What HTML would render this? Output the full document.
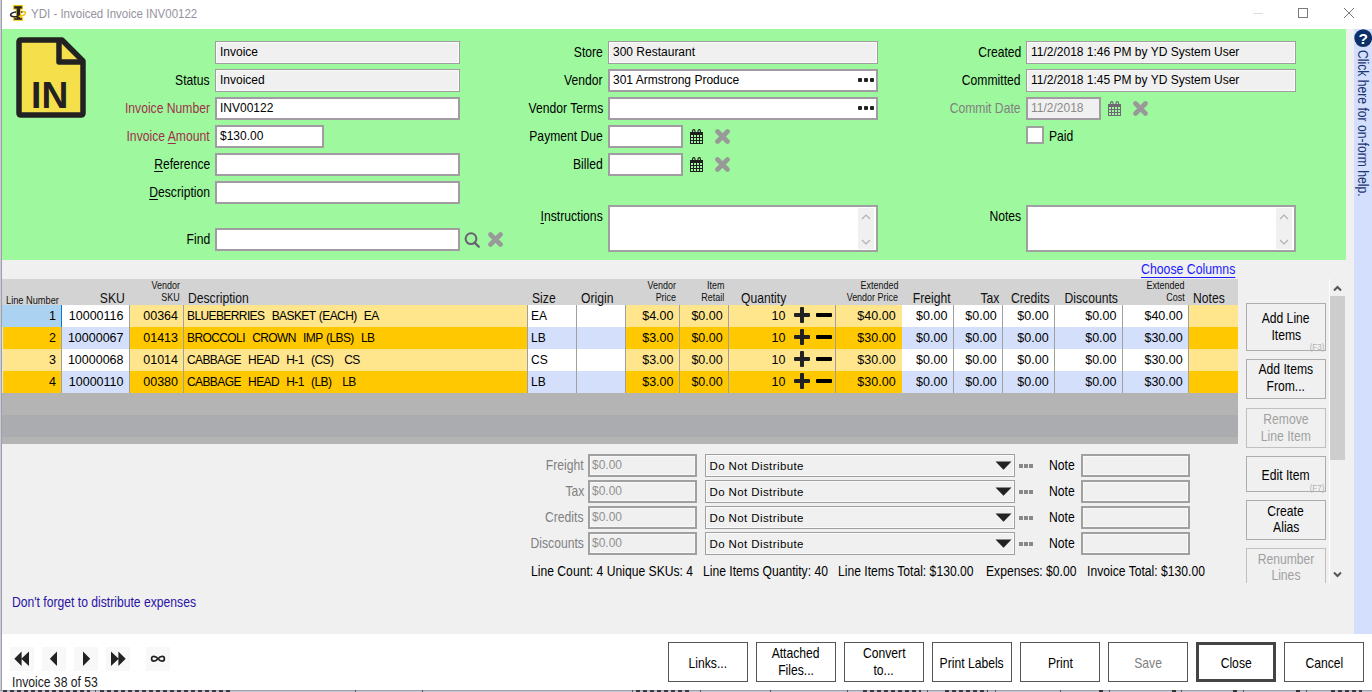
<!DOCTYPE html>
<html><head><meta charset="utf-8"><style>
html,body{margin:0;padding:0;width:1372px;height:692px;overflow:hidden;background:#fff}
body{position:relative;font-family:"Liberation Sans", sans-serif}
.r,.t{position:absolute}
.t{white-space:nowrap}
u{text-decoration:underline;text-underline-offset:2px}
</style></head><body>
<div class="r" style="left:0px;top:0px;width:1372px;height:692px;background:#ffffff;"></div>
<div class="r" style="left:0px;top:0px;width:1px;height:692px;background:#c8cce0;"></div>
<div class="r" style="left:1px;top:0px;width:1px;height:692px;background:#a0a0a0;"></div>
<div class="r" style="left:2px;top:29px;width:1344px;height:231px;background:#9ef89e;"></div>
<div class="r" style="left:2px;top:260px;width:1352px;height:374px;background:#f0f0f0;"></div>
<div class="r" style="left:1346px;top:29px;width:8px;height:231px;background:#f0f0f0;"></div>
<div class="r" style="left:1354px;top:29px;width:18px;height:605px;background:#d4defd;"></div>
<div class="r" style="left:0px;top:690px;width:1372px;height:2px;background:#c4c8d6;"></div>
<div class="r" style="left:0px;top:690px;width:1372px;height:1px;background:#9ea2ae;"></div>
<div class="r" style="left:3px;top:690px;width:87px;height:2px;background:repeating-linear-gradient(90deg,#3a3a44 0 4px,transparent 4px 7px)"></div>
<div class="r" style="left:100px;top:690px;width:132px;height:2px;background:repeating-linear-gradient(90deg,#3a3a44 0 4px,transparent 4px 7px)"></div>
<div class="r" style="left:636px;top:690px;width:55px;height:2px;background:repeating-linear-gradient(90deg,#3a3a44 0 4px,transparent 4px 7px)"></div>
<div class="r" style="left:863px;top:690px;width:58px;height:2px;background:repeating-linear-gradient(90deg,#3a3a44 0 4px,transparent 4px 7px)"></div>
<div class="r" style="left:945px;top:690px;width:43px;height:2px;background:repeating-linear-gradient(90deg,#3a3a44 0 4px,transparent 4px 7px)"></div>
<div class="r" style="left:1331px;top:690px;width:31px;height:2px;background:repeating-linear-gradient(90deg,#3a3a44 0 4px,transparent 4px 7px)"></div>
<div class="r" style="left:95px;top:690px;width:1px;height:2px;background:#555;"></div>
<div class="r" style="left:355px;top:690px;width:1px;height:2px;background:#555;"></div>
<div class="r" style="left:422px;top:690px;width:1px;height:2px;background:#555;"></div>
<div class="r" style="left:632px;top:690px;width:1px;height:2px;background:#555;"></div>
<div class="r" style="left:700px;top:690px;width:1px;height:2px;background:#555;"></div>
<div class="r" style="left:770px;top:690px;width:1px;height:2px;background:#555;"></div>
<div class="r" style="left:847px;top:690px;width:1px;height:2px;background:#555;"></div>
<div class="r" style="left:927px;top:690px;width:1px;height:2px;background:#555;"></div>
<div class="r" style="left:995px;top:690px;width:1px;height:2px;background:#555;"></div>
<div class="r" style="left:1060px;top:690px;width:1px;height:2px;background:#555;"></div>
<div class="r" style="left:1109px;top:690px;width:1px;height:2px;background:#555;"></div>
<div class="r" style="left:1181px;top:690px;width:1px;height:2px;background:#555;"></div>
<div class="r" style="left:1243px;top:690px;width:1px;height:2px;background:#555;"></div>
<div class="r" style="left:1306px;top:690px;width:1px;height:2px;background:#555;"></div>
<div class="r" style="left:1099px;top:690px;width:4px;height:2px;background:#333;"></div>
<div class="r" style="left:1172px;top:690px;width:4px;height:2px;background:#333;"></div>
<div class="r" style="left:1233px;top:690px;width:4px;height:2px;background:#333;"></div>
<div class="r" style="left:1296px;top:690px;width:4px;height:2px;background:#333;"></div>
<svg class="r" style="left:9px;top:4px" width="18" height="18" viewBox="0 0 18 18">
<path d="M4.1 1.1 H14 V5.5 H12 V13.1 H14 V16.8 H4.1 V13.1 H6.8 V5.5 H4.1 Z" fill="#f2c400"/>
<rect x="5.2" y="2.2" width="7.7" height="2.4" fill="#23232b"/>
<rect x="5.2" y="14.2" width="7.7" height="1.6" fill="#23232b"/>
<rect x="7.8" y="4.2" width="3.2" height="10.4" fill="#23232b"/>
<path d="M9.5 12.6 C5 13.2 1.2 12.6 1.6 10.8 C1.9 9.3 4.5 8.4 7.2 8.1" fill="none" stroke="#23232b" stroke-width="1.5"/>
<path d="M9.5 12.6 C13 12 16.8 10.4 16.5 8.6 C16.3 7.6 14.8 7.4 13.4 7.8" fill="none" stroke="#f2c400" stroke-width="1.5"/>
<path d="M13.4 7.8 L12.2 8.2" stroke="#23232b" stroke-width="1.5"/>
</svg>
<div class="t" style="left:31px;top:6.00px;font-size:13px;line-height:16px;color:#96929e;"><span style="display:inline-block;transform:scaleX(0.885);transform-origin:0 50%">YDI - Invoiced Invoice INV00122</span></div>
<div class="r" style="left:1253px;top:13px;width:10px;height:1px;background:#dedede;"></div>
<div class="r" style="left:1298px;top:8px;width:10px;height:10px;background:transparent;border:1px solid #7a7a7a;box-sizing:border-box;"></div>
<svg class="r" style="left:1343px;top:7px" width="12" height="12" viewBox="0 0 12 12"><path d="M1 1 L11 11 M11 1 L1 11" stroke="#6a6a6a" stroke-width="0.9"/></svg>
<svg class="r" style="left:15px;top:36px" width="72" height="83" viewBox="0 0 72 83">
<path d="M6 4 H47 L68 25 V77 Q68 79 66 79 H6 Q4 79 4 77 V6 Q4 4 6 4 Z" fill="#f5e04c" stroke="#222" stroke-width="5.5" stroke-linejoin="round"/>
<path d="M44 4 V26 H68" fill="none" stroke="#222" stroke-width="5.5" stroke-linejoin="round"/>
<text x="16.1" y="72" font-family="Liberation Sans" font-weight="bold" font-size="36" fill="#222" textLength="37.2" lengthAdjust="spacingAndGlyphs">IN</text>
</svg>
<div class="r" style="left:215px;top:41px;width:245px;height:23px;background:#f0f0f0;border:1px solid #a09ca0;box-sizing:border-box;box-shadow:inset 0 0 0 1px #fafafa;"></div>
<div class="t" style="left:220px;top:45.00px;font-size:12px;line-height:15px;color:#000;">Invoice</div>
<div class="t" style="left:-90px;width:300px;text-align:right;top:71.00px;font-size:15px;line-height:18px;color:#000;"><span style="display:inline-block;transform:scaleX(0.81);transform-origin:100% 50%">Status</span></div>
<div class="r" style="left:215px;top:69px;width:245px;height:23px;background:#f0f0f0;border:1px solid #a09ca0;box-sizing:border-box;box-shadow:inset 0 0 0 1px #fafafa;"></div>
<div class="t" style="left:220px;top:73.00px;font-size:12px;line-height:15px;color:#000;">Invoiced</div>
<div class="t" style="left:-90px;width:300px;text-align:right;top:99.00px;font-size:15px;line-height:18px;color:#a0304a;"><span style="display:inline-block;transform:scaleX(0.81);transform-origin:100% 50%">Invoice Number</span></div>
<div class="r" style="left:215px;top:97px;width:245px;height:23px;background:#ffffff;border:2px solid #a09ca2;box-sizing:border-box;"></div>
<div class="t" style="left:220px;top:101.00px;font-size:12px;line-height:15px;color:#000;">INV00122</div>
<div class="t" style="left:-90px;width:300px;text-align:right;top:127.00px;font-size:15px;line-height:18px;color:#a0304a;"><span style="display:inline-block;transform:scaleX(0.81);transform-origin:100% 50%">Invoice <u>A</u>mount</span></div>
<div class="r" style="left:215px;top:125px;width:109px;height:23px;background:#ffffff;border:2px solid #a09ca2;box-sizing:border-box;"></div>
<div class="t" style="left:220px;top:129.00px;font-size:12px;line-height:15px;color:#000;">$130.00</div>
<div class="t" style="left:-90px;width:300px;text-align:right;top:155.00px;font-size:15px;line-height:18px;color:#000;"><span style="display:inline-block;transform:scaleX(0.81);transform-origin:100% 50%"><u>R</u>eference</span></div>
<div class="r" style="left:215px;top:153px;width:245px;height:23px;background:#ffffff;border:2px solid #a09ca2;box-sizing:border-box;"></div>
<div class="t" style="left:-90px;width:300px;text-align:right;top:183.00px;font-size:15px;line-height:18px;color:#000;"><span style="display:inline-block;transform:scaleX(0.81);transform-origin:100% 50%"><u>D</u>escription</span></div>
<div class="r" style="left:215px;top:181px;width:245px;height:23px;background:#ffffff;border:2px solid #a09ca2;box-sizing:border-box;"></div>
<div class="t" style="left:-90px;width:300px;text-align:right;top:230.00px;font-size:15px;line-height:18px;color:#000;"><span style="display:inline-block;transform:scaleX(0.81);transform-origin:100% 50%">Find</span></div>
<div class="r" style="left:215px;top:228px;width:245px;height:23px;background:#ffffff;border:2px solid #a09ca2;box-sizing:border-box;"></div>
<svg class="r" style="left:462px;top:230px" width="20" height="20" viewBox="0 0 20 20"><circle cx="9" cy="8.7" r="5.4" fill="none" stroke="#666070" stroke-width="2"/><path d="M12.6 12.6 L16.8 16.8" stroke="#666070" stroke-width="2.2" stroke-linecap="round"/></svg>
<svg class="r" style="left:488px;top:232px" width="15" height="15" viewBox="0 0 15 15"><path d="M2.5 2.5 L12.5 12.5 M12.5 2.5 L2.5 12.5" stroke="#999" stroke-width="4.6" stroke-linecap="round"/></svg>
<div class="t" style="left:303px;width:300px;text-align:right;top:43.00px;font-size:15px;line-height:18px;color:#000;"><span style="display:inline-block;transform:scaleX(0.81);transform-origin:100% 50%">Store</span></div>
<div class="r" style="left:608px;top:41px;width:270px;height:23px;background:#f0f0f0;border:1px solid #a09ca0;box-sizing:border-box;box-shadow:inset 0 0 0 1px #fafafa;"></div>
<div class="t" style="left:613px;top:45.00px;font-size:12px;line-height:15px;color:#000;">300 Restaurant</div>
<div class="t" style="left:303px;width:300px;text-align:right;top:71.00px;font-size:15px;line-height:18px;color:#000;"><span style="display:inline-block;transform:scaleX(0.81);transform-origin:100% 50%">Vendor</span></div>
<div class="r" style="left:608px;top:69px;width:270px;height:23px;background:#ffffff;border:2px solid #a09ca2;box-sizing:border-box;"></div>
<div class="t" style="left:613px;top:73.00px;font-size:12px;line-height:15px;color:#000;">301 Armstrong Produce</div>
<div class="r" style="left:858px;top:78px;width:4px;height:4px;background:#222;border-radius:1px;"></div>
<div class="r" style="left:864px;top:78px;width:4px;height:4px;background:#222;border-radius:1px;"></div>
<div class="r" style="left:870px;top:78px;width:4px;height:4px;background:#222;border-radius:1px;"></div>
<div class="t" style="left:303px;width:300px;text-align:right;top:99.00px;font-size:15px;line-height:18px;color:#000;"><span style="display:inline-block;transform:scaleX(0.81);transform-origin:100% 50%">Vendor Terms</span></div>
<div class="r" style="left:608px;top:97px;width:270px;height:23px;background:#ffffff;border:2px solid #a09ca2;box-sizing:border-box;"></div>
<div class="r" style="left:858px;top:106px;width:4px;height:4px;background:#222;border-radius:1px;"></div>
<div class="r" style="left:864px;top:106px;width:4px;height:4px;background:#222;border-radius:1px;"></div>
<div class="r" style="left:870px;top:106px;width:4px;height:4px;background:#222;border-radius:1px;"></div>
<div class="t" style="left:303px;width:300px;text-align:right;top:127.00px;font-size:15px;line-height:18px;color:#000;"><span style="display:inline-block;transform:scaleX(0.81);transform-origin:100% 50%">Payment Due</span></div>
<div class="r" style="left:608px;top:125px;width:75px;height:23px;background:#ffffff;border:2px solid #a09ca2;box-sizing:border-box;"></div>
<svg class="r" style="left:690px;top:129px" width="14" height="15" viewBox="0 0 14 15">
<rect x="0" y="3" width="13" height="12" fill="#1e1e1e" shape-rendering="crispEdges"/>
<g fill="#9ef89e" shape-rendering="crispEdges"><rect x="1" y="6" width="2" height="2"/><rect x="1" y="9" width="2" height="2"/><rect x="1" y="12" width="2" height="2"/><rect x="4" y="6" width="2" height="2"/><rect x="4" y="9" width="2" height="2"/><rect x="4" y="12" width="2" height="2"/><rect x="7" y="6" width="2" height="2"/><rect x="7" y="9" width="2" height="2"/><rect x="7" y="12" width="2" height="2"/><rect x="10" y="6" width="2" height="2"/><rect x="10" y="9" width="2" height="2"/><rect x="10" y="12" width="2" height="2"/></g>
<path d="M2.5 4 V2.2 Q2.5 0.6 3.8 0.6 Q5 0.6 5 2.2 V4 M8 4 V2.2 Q8 0.6 9.2 0.6 Q10.5 0.6 10.5 2.2 V4" fill="none" stroke="#1e1e1e" stroke-width="1.1"/>
</svg>
<svg class="r" style="left:715px;top:129px" width="15" height="15" viewBox="0 0 15 15"><path d="M2.5 2.5 L12.5 12.5 M12.5 2.5 L2.5 12.5" stroke="#999" stroke-width="4.6" stroke-linecap="round"/></svg>
<div class="t" style="left:303px;width:300px;text-align:right;top:155.00px;font-size:15px;line-height:18px;color:#000;"><span style="display:inline-block;transform:scaleX(0.81);transform-origin:100% 50%">Billed</span></div>
<div class="r" style="left:608px;top:153px;width:75px;height:23px;background:#ffffff;border:2px solid #a09ca2;box-sizing:border-box;"></div>
<svg class="r" style="left:690px;top:157px" width="14" height="15" viewBox="0 0 14 15">
<rect x="0" y="3" width="13" height="12" fill="#1e1e1e" shape-rendering="crispEdges"/>
<g fill="#9ef89e" shape-rendering="crispEdges"><rect x="1" y="6" width="2" height="2"/><rect x="1" y="9" width="2" height="2"/><rect x="1" y="12" width="2" height="2"/><rect x="4" y="6" width="2" height="2"/><rect x="4" y="9" width="2" height="2"/><rect x="4" y="12" width="2" height="2"/><rect x="7" y="6" width="2" height="2"/><rect x="7" y="9" width="2" height="2"/><rect x="7" y="12" width="2" height="2"/><rect x="10" y="6" width="2" height="2"/><rect x="10" y="9" width="2" height="2"/><rect x="10" y="12" width="2" height="2"/></g>
<path d="M2.5 4 V2.2 Q2.5 0.6 3.8 0.6 Q5 0.6 5 2.2 V4 M8 4 V2.2 Q8 0.6 9.2 0.6 Q10.5 0.6 10.5 2.2 V4" fill="none" stroke="#1e1e1e" stroke-width="1.1"/>
</svg>
<svg class="r" style="left:715px;top:157px" width="15" height="15" viewBox="0 0 15 15"><path d="M2.5 2.5 L12.5 12.5 M12.5 2.5 L2.5 12.5" stroke="#999" stroke-width="4.6" stroke-linecap="round"/></svg>
<div class="t" style="left:303px;width:300px;text-align:right;top:207.00px;font-size:15px;line-height:18px;color:#000;"><span style="display:inline-block;transform:scaleX(0.81);transform-origin:100% 50%"><u>I</u>nstructions</span></div>
<div class="r" style="left:608px;top:205px;width:270px;height:47px;background:#fff;border:2px solid #a0a0a0;box-sizing:border-box;"></div>
<div class="r" style="left:858px;top:208px;width:16px;height:41px;background:#f0f0f0;"></div>
<svg class="r" style="left:860px;top:213px" width="12" height="8" viewBox="0 0 12 8"><path d="M2 6 L6 2 L10 6" fill="none" stroke="#b0b0b0" stroke-width="1.2"/></svg>
<svg class="r" style="left:860px;top:238px" width="12" height="8" viewBox="0 0 12 8"><path d="M2 2 L6 6 L10 2" fill="none" stroke="#b0b0b0" stroke-width="1.2"/></svg>
<div class="t" style="left:721px;width:300px;text-align:right;top:43.00px;font-size:15px;line-height:18px;color:#000;"><span style="display:inline-block;transform:scaleX(0.81);transform-origin:100% 50%">Created</span></div>
<div class="r" style="left:1026px;top:41px;width:270px;height:23px;background:#f0f0f0;border:1px solid #a09ca0;box-sizing:border-box;box-shadow:inset 0 0 0 1px #fafafa;"></div>
<div class="t" style="left:1031px;top:45.00px;font-size:12px;line-height:15px;color:#000;">11/2/2018 1:46 PM by YD System User</div>
<div class="t" style="left:721px;width:300px;text-align:right;top:71.00px;font-size:15px;line-height:18px;color:#000;"><span style="display:inline-block;transform:scaleX(0.81);transform-origin:100% 50%">Committed</span></div>
<div class="r" style="left:1026px;top:69px;width:270px;height:23px;background:#f0f0f0;border:1px solid #a09ca0;box-sizing:border-box;box-shadow:inset 0 0 0 1px #fafafa;"></div>
<div class="t" style="left:1031px;top:73.00px;font-size:12px;line-height:15px;color:#000;">11/2/2018 1:45 PM by YD System User</div>
<div class="t" style="left:721px;width:300px;text-align:right;top:99.00px;font-size:15px;line-height:18px;color:#808080;"><span style="display:inline-block;transform:scaleX(0.81);transform-origin:100% 50%">Commit Date</span></div>
<div class="r" style="left:1026px;top:97px;width:75px;height:23px;background:#f0f0f0;border:2px solid #a09ca2;box-sizing:border-box;"></div>
<div class="t" style="left:1031px;top:101.00px;font-size:12px;line-height:15px;color:#8a8a8a;">11/2/2018</div>
<svg class="r" style="left:1108px;top:101px" width="14" height="15" viewBox="0 0 14 15">
<rect x="0" y="3" width="13" height="12" fill="#6e6874" shape-rendering="crispEdges"/>
<g fill="#9ef89e" shape-rendering="crispEdges"><rect x="1" y="6" width="2" height="2"/><rect x="1" y="9" width="2" height="2"/><rect x="1" y="12" width="2" height="2"/><rect x="4" y="6" width="2" height="2"/><rect x="4" y="9" width="2" height="2"/><rect x="4" y="12" width="2" height="2"/><rect x="7" y="6" width="2" height="2"/><rect x="7" y="9" width="2" height="2"/><rect x="7" y="12" width="2" height="2"/><rect x="10" y="6" width="2" height="2"/><rect x="10" y="9" width="2" height="2"/><rect x="10" y="12" width="2" height="2"/></g>
<path d="M2.5 4 V2.2 Q2.5 0.6 3.8 0.6 Q5 0.6 5 2.2 V4 M8 4 V2.2 Q8 0.6 9.2 0.6 Q10.5 0.6 10.5 2.2 V4" fill="none" stroke="#6e6874" stroke-width="1.1"/>
</svg>
<svg class="r" style="left:1133px;top:101px" width="15" height="15" viewBox="0 0 15 15"><path d="M2.5 2.5 L12.5 12.5 M12.5 2.5 L2.5 12.5" stroke="#999" stroke-width="4.6" stroke-linecap="round"/></svg>
<div class="r" style="left:1026px;top:126px;width:18px;height:18px;background:#fff;border:2px solid #a0a0a0;box-sizing:border-box;"></div>
<div class="t" style="left:1049px;top:127.00px;font-size:15px;line-height:18px;color:#000;"><span style="display:inline-block;transform:scaleX(0.81);transform-origin:0 50%">Paid</span></div>
<div class="t" style="left:721px;width:300px;text-align:right;top:207.00px;font-size:15px;line-height:18px;color:#000;"><span style="display:inline-block;transform:scaleX(0.81);transform-origin:100% 50%">Notes</span></div>
<div class="r" style="left:1026px;top:205px;width:270px;height:47px;background:#fff;border:2px solid #a0a0a0;box-sizing:border-box;"></div>
<div class="r" style="left:1276px;top:208px;width:16px;height:41px;background:#f0f0f0;"></div>
<svg class="r" style="left:1278px;top:213px" width="12" height="8" viewBox="0 0 12 8"><path d="M2 6 L6 2 L10 6" fill="none" stroke="#b0b0b0" stroke-width="1.2"/></svg>
<svg class="r" style="left:1278px;top:238px" width="12" height="8" viewBox="0 0 12 8"><path d="M2 2 L6 6 L10 2" fill="none" stroke="#b0b0b0" stroke-width="1.2"/></svg>
<svg class="r" style="left:1354px;top:29px" width="18" height="19" viewBox="0 0 18 19"><circle cx="9.2" cy="9.1" r="8.9" fill="#0d3068"/><text x="9.2" y="15.4" text-anchor="middle" font-family="Liberation Sans" font-weight="bold" font-size="15.5" fill="#fff">?</text></svg>
<div class="t" style="left:1354px;top:50px;font-size:15px;line-height:18px;color:#1b3570;transform-origin:0 0;transform:translate(18px,0) rotate(90deg) scaleX(0.81);white-space:nowrap">Click here for on-form help.</div>
<div class="r" style="left:2px;top:279px;width:1236px;height:26px;background:#d3d3d3;"></div>
<div class="r" style="left:2px;top:305px;width:60px;height:22px;background:#acd2f2;"></div>
<div class="r" style="left:62px;top:305px;width:68px;height:22px;background:#ffffff;"></div>
<div class="r" style="left:130px;top:305px;width:54px;height:22px;background:#ffe58c;"></div>
<div class="r" style="left:184px;top:305px;width:344px;height:22px;background:#ffe58c;"></div>
<div class="r" style="left:528px;top:305px;width:49px;height:22px;background:#ffffff;"></div>
<div class="r" style="left:577px;top:305px;width:49px;height:22px;background:#ffffff;"></div>
<div class="r" style="left:626px;top:305px;width:54px;height:22px;background:#ffe58c;"></div>
<div class="r" style="left:680px;top:305px;width:49px;height:22px;background:#ffe58c;"></div>
<div class="r" style="left:729px;top:305px;width:107px;height:22px;background:#ffe58c;"></div>
<div class="r" style="left:836px;top:305px;width:66px;height:22px;background:#ffe58c;"></div>
<div class="r" style="left:902px;top:305px;width:52px;height:22px;background:#ffffff;"></div>
<div class="r" style="left:954px;top:305px;width:49px;height:22px;background:#ffffff;"></div>
<div class="r" style="left:1003px;top:305px;width:52px;height:22px;background:#ffffff;"></div>
<div class="r" style="left:1055px;top:305px;width:68px;height:22px;background:#ffffff;"></div>
<div class="r" style="left:1123px;top:305px;width:66px;height:22px;background:#ffffff;"></div>
<div class="r" style="left:1189px;top:305px;width:49px;height:22px;background:#ffe58c;"></div>
<div class="r" style="left:2px;top:327px;width:60px;height:22px;background:#ffc800;"></div>
<div class="r" style="left:62px;top:327px;width:68px;height:22px;background:#d3dffb;"></div>
<div class="r" style="left:130px;top:327px;width:54px;height:22px;background:#ffc800;"></div>
<div class="r" style="left:184px;top:327px;width:344px;height:22px;background:#ffc800;"></div>
<div class="r" style="left:528px;top:327px;width:49px;height:22px;background:#d3dffb;"></div>
<div class="r" style="left:577px;top:327px;width:49px;height:22px;background:#d3dffb;"></div>
<div class="r" style="left:626px;top:327px;width:54px;height:22px;background:#ffc800;"></div>
<div class="r" style="left:680px;top:327px;width:49px;height:22px;background:#ffc800;"></div>
<div class="r" style="left:729px;top:327px;width:107px;height:22px;background:#ffc800;"></div>
<div class="r" style="left:836px;top:327px;width:66px;height:22px;background:#ffc800;"></div>
<div class="r" style="left:902px;top:327px;width:52px;height:22px;background:#d3dffb;"></div>
<div class="r" style="left:954px;top:327px;width:49px;height:22px;background:#d3dffb;"></div>
<div class="r" style="left:1003px;top:327px;width:52px;height:22px;background:#d3dffb;"></div>
<div class="r" style="left:1055px;top:327px;width:68px;height:22px;background:#d3dffb;"></div>
<div class="r" style="left:1123px;top:327px;width:66px;height:22px;background:#d3dffb;"></div>
<div class="r" style="left:1189px;top:327px;width:49px;height:22px;background:#ffc800;"></div>
<div class="r" style="left:2px;top:349px;width:60px;height:22px;background:#ffe58c;"></div>
<div class="r" style="left:62px;top:349px;width:68px;height:22px;background:#ffffff;"></div>
<div class="r" style="left:130px;top:349px;width:54px;height:22px;background:#ffe58c;"></div>
<div class="r" style="left:184px;top:349px;width:344px;height:22px;background:#ffe58c;"></div>
<div class="r" style="left:528px;top:349px;width:49px;height:22px;background:#ffffff;"></div>
<div class="r" style="left:577px;top:349px;width:49px;height:22px;background:#ffffff;"></div>
<div class="r" style="left:626px;top:349px;width:54px;height:22px;background:#ffe58c;"></div>
<div class="r" style="left:680px;top:349px;width:49px;height:22px;background:#ffe58c;"></div>
<div class="r" style="left:729px;top:349px;width:107px;height:22px;background:#ffe58c;"></div>
<div class="r" style="left:836px;top:349px;width:66px;height:22px;background:#ffe58c;"></div>
<div class="r" style="left:902px;top:349px;width:52px;height:22px;background:#ffffff;"></div>
<div class="r" style="left:954px;top:349px;width:49px;height:22px;background:#ffffff;"></div>
<div class="r" style="left:1003px;top:349px;width:52px;height:22px;background:#ffffff;"></div>
<div class="r" style="left:1055px;top:349px;width:68px;height:22px;background:#ffffff;"></div>
<div class="r" style="left:1123px;top:349px;width:66px;height:22px;background:#ffffff;"></div>
<div class="r" style="left:1189px;top:349px;width:49px;height:22px;background:#ffe58c;"></div>
<div class="r" style="left:2px;top:371px;width:60px;height:22px;background:#ffc800;"></div>
<div class="r" style="left:62px;top:371px;width:68px;height:22px;background:#d3dffb;"></div>
<div class="r" style="left:130px;top:371px;width:54px;height:22px;background:#ffc800;"></div>
<div class="r" style="left:184px;top:371px;width:344px;height:22px;background:#ffc800;"></div>
<div class="r" style="left:528px;top:371px;width:49px;height:22px;background:#d3dffb;"></div>
<div class="r" style="left:577px;top:371px;width:49px;height:22px;background:#d3dffb;"></div>
<div class="r" style="left:626px;top:371px;width:54px;height:22px;background:#ffc800;"></div>
<div class="r" style="left:680px;top:371px;width:49px;height:22px;background:#ffc800;"></div>
<div class="r" style="left:729px;top:371px;width:107px;height:22px;background:#ffc800;"></div>
<div class="r" style="left:836px;top:371px;width:66px;height:22px;background:#ffc800;"></div>
<div class="r" style="left:902px;top:371px;width:52px;height:22px;background:#d3dffb;"></div>
<div class="r" style="left:954px;top:371px;width:49px;height:22px;background:#d3dffb;"></div>
<div class="r" style="left:1003px;top:371px;width:52px;height:22px;background:#d3dffb;"></div>
<div class="r" style="left:1055px;top:371px;width:68px;height:22px;background:#d3dffb;"></div>
<div class="r" style="left:1123px;top:371px;width:66px;height:22px;background:#d3dffb;"></div>
<div class="r" style="left:1189px;top:371px;width:49px;height:22px;background:#ffc800;"></div>
<div class="r" style="left:61px;top:305px;width:1px;height:88px;background:#a0a0a0;"></div>
<div class="r" style="left:129px;top:305px;width:1px;height:88px;background:#a0a0a0;"></div>
<div class="r" style="left:183px;top:305px;width:1px;height:88px;background:#a0a0a0;"></div>
<div class="r" style="left:527px;top:305px;width:1px;height:88px;background:#a0a0a0;"></div>
<div class="r" style="left:576px;top:305px;width:1px;height:88px;background:#a0a0a0;"></div>
<div class="r" style="left:625px;top:305px;width:1px;height:88px;background:#a0a0a0;"></div>
<div class="r" style="left:679px;top:305px;width:1px;height:88px;background:#a0a0a0;"></div>
<div class="r" style="left:728px;top:305px;width:1px;height:88px;background:#a0a0a0;"></div>
<div class="r" style="left:835px;top:305px;width:1px;height:88px;background:#a0a0a0;"></div>
<div class="r" style="left:953px;top:305px;width:1px;height:88px;background:#a0a0a0;"></div>
<div class="r" style="left:1002px;top:305px;width:1px;height:88px;background:#a0a0a0;"></div>
<div class="r" style="left:1054px;top:305px;width:1px;height:88px;background:#a0a0a0;"></div>
<div class="r" style="left:1122px;top:305px;width:1px;height:88px;background:#a0a0a0;"></div>
<div class="r" style="left:1188px;top:305px;width:1px;height:88px;background:#a0a0a0;"></div>
<div class="r" style="left:61px;top:305px;width:1px;height:22px;background:#0a78d7;"></div>
<div class="r" style="left:2px;top:327px;width:1px;height:117px;background:#e4e4ec;"></div>
<div class="r" style="left:2px;top:393px;width:1236px;height:22px;background:#b4b4b4;"></div>
<div class="r" style="left:2px;top:415px;width:1236px;height:22px;background:#abacb0;"></div>
<div class="r" style="left:2px;top:437px;width:1236px;height:7px;background:#b4b4b4;"></div>
<div class="t" style="left:6px;top:293.00px;font-size:11px;line-height:14px;color:#111;"><span style="display:inline-block;transform:scaleX(0.84);transform-origin:0 50%">Line Number</span></div>
<div class="t" style="left:-75.2px;width:200px;text-align:right;top:289.00px;font-size:15px;line-height:18px;color:#111;"><span style="display:inline-block;transform:scaleX(0.81);transform-origin:100% 50%">SKU</span></div>
<div class="t" style="left:-20.400000000000006px;width:200px;text-align:right;top:278.00px;font-size:11px;line-height:14px;color:#111;"><span style="display:inline-block;transform:scaleX(0.815);transform-origin:100% 50%">Vendor</span></div>
<div class="t" style="left:-20.400000000000006px;width:200px;text-align:right;top:290.00px;font-size:11px;line-height:14px;color:#111;"><span style="display:inline-block;transform:scaleX(0.815);transform-origin:100% 50%">SKU</span></div>
<div class="t" style="left:188px;top:289.00px;font-size:15px;line-height:18px;color:#111;"><span style="display:inline-block;transform:scaleX(0.81);transform-origin:0 50%">Description</span></div>
<div class="t" style="left:532px;top:289.00px;font-size:15px;line-height:18px;color:#111;"><span style="display:inline-block;transform:scaleX(0.81);transform-origin:0 50%">Size</span></div>
<div class="t" style="left:581px;top:289.00px;font-size:15px;line-height:18px;color:#111;"><span style="display:inline-block;transform:scaleX(0.81);transform-origin:0 50%">Origin</span></div>
<div class="t" style="left:475.70000000000005px;width:200px;text-align:right;top:278.00px;font-size:11px;line-height:14px;color:#111;"><span style="display:inline-block;transform:scaleX(0.815);transform-origin:100% 50%">Vendor</span></div>
<div class="t" style="left:475.70000000000005px;width:200px;text-align:right;top:290.00px;font-size:11px;line-height:14px;color:#111;"><span style="display:inline-block;transform:scaleX(0.815);transform-origin:100% 50%">Price</span></div>
<div class="t" style="left:524.5px;width:200px;text-align:right;top:278.00px;font-size:11px;line-height:14px;color:#111;"><span style="display:inline-block;transform:scaleX(0.815);transform-origin:100% 50%">Item</span></div>
<div class="t" style="left:524.5px;width:200px;text-align:right;top:290.00px;font-size:11px;line-height:14px;color:#111;"><span style="display:inline-block;transform:scaleX(0.815);transform-origin:100% 50%">Retail</span></div>
<div class="t" style="left:741px;top:289.00px;font-size:15px;line-height:18px;color:#111;"><span style="display:inline-block;transform:scaleX(0.81);transform-origin:0 50%">Quantity</span></div>
<div class="t" style="left:698px;width:200px;text-align:right;top:278.00px;font-size:11px;line-height:14px;color:#111;"><span style="display:inline-block;transform:scaleX(0.815);transform-origin:100% 50%">Extended</span></div>
<div class="t" style="left:698px;width:200px;text-align:right;top:290.00px;font-size:11px;line-height:14px;color:#111;"><span style="display:inline-block;transform:scaleX(0.815);transform-origin:100% 50%">Vendor Price</span></div>
<div class="t" style="left:750.5px;width:200px;text-align:right;top:289.00px;font-size:15px;line-height:18px;color:#111;"><span style="display:inline-block;transform:scaleX(0.81);transform-origin:100% 50%">Freight</span></div>
<div class="t" style="left:799px;width:200px;text-align:right;top:289.00px;font-size:15px;line-height:18px;color:#111;"><span style="display:inline-block;transform:scaleX(0.81);transform-origin:100% 50%">Tax</span></div>
<div class="t" style="left:850px;width:200px;text-align:right;top:289.00px;font-size:15px;line-height:18px;color:#111;"><span style="display:inline-block;transform:scaleX(0.81);transform-origin:100% 50%">Credits</span></div>
<div class="t" style="left:917.5px;width:200px;text-align:right;top:289.00px;font-size:15px;line-height:18px;color:#111;"><span style="display:inline-block;transform:scaleX(0.81);transform-origin:100% 50%">Discounts</span></div>
<div class="t" style="left:984.7px;width:200px;text-align:right;top:278.00px;font-size:11px;line-height:14px;color:#111;"><span style="display:inline-block;transform:scaleX(0.815);transform-origin:100% 50%">Extended</span></div>
<div class="t" style="left:984.7px;width:200px;text-align:right;top:290.00px;font-size:11px;line-height:14px;color:#111;"><span style="display:inline-block;transform:scaleX(0.815);transform-origin:100% 50%">Cost</span></div>
<div class="t" style="left:1193px;top:289.00px;font-size:15px;line-height:18px;color:#111;"><span style="display:inline-block;transform:scaleX(0.81);transform-origin:0 50%">Notes</span></div>
<div class="t" style="left:-144px;width:200px;text-align:right;top:309.00px;font-size:12.5px;line-height:15px;color:#000;">1</div>
<div class="t" style="left:-76.5px;width:200px;text-align:right;top:309.00px;font-size:12.5px;line-height:15px;color:#000;">10000116</div>
<div class="t" style="left:-22px;width:200px;text-align:right;top:309.00px;font-size:12.5px;line-height:15px;color:#000;">00364</div>
<div class="t" style="left:187px;top:309.00px;font-size:12px;line-height:15px;color:#000;letter-spacing:-0.6px;word-spacing:0.9px;white-space:pre;">BLUEBERRIES  BASKET (EACH)  EA</div>
<div class="t" style="left:531px;top:309.00px;font-size:12px;line-height:15px;color:#000;">EA</div>
<div class="t" style="left:473.5px;width:200px;text-align:right;top:309.00px;font-size:12.5px;line-height:15px;color:#000;">$4.00</div>
<div class="t" style="left:522.7px;width:200px;text-align:right;top:309.00px;font-size:12.5px;line-height:15px;color:#000;">$0.00</div>
<div class="t" style="left:585.4px;width:200px;text-align:right;top:309.00px;font-size:12.5px;line-height:15px;color:#000;">10</div>
<div class="r" style="left:794px;top:313px;width:16px;height:4px;background:#222;border-radius:1px;"></div>
<div class="r" style="left:800px;top:307px;width:4px;height:16px;background:#222;border-radius:1px;"></div>
<div class="r" style="left:816px;top:313px;width:16px;height:4px;background:#000;border-radius:1px;"></div>
<div class="t" style="left:695.6px;width:200px;text-align:right;top:309.00px;font-size:12.5px;line-height:15px;color:#000;">$40.00</div>
<div class="t" style="left:747.4px;width:200px;text-align:right;top:309.00px;font-size:12.5px;line-height:15px;color:#000;">$0.00</div>
<div class="t" style="left:796.6px;width:200px;text-align:right;top:309.00px;font-size:12.5px;line-height:15px;color:#000;">$0.00</div>
<div class="t" style="left:848.5999999999999px;width:200px;text-align:right;top:309.00px;font-size:12.5px;line-height:15px;color:#000;">$0.00</div>
<div class="t" style="left:916.5px;width:200px;text-align:right;top:309.00px;font-size:12.5px;line-height:15px;color:#000;">$0.00</div>
<div class="t" style="left:982.7px;width:200px;text-align:right;top:309.00px;font-size:12.5px;line-height:15px;color:#000;">$40.00</div>
<div class="t" style="left:-144px;width:200px;text-align:right;top:331.00px;font-size:12.5px;line-height:15px;color:#000;">2</div>
<div class="t" style="left:-76.5px;width:200px;text-align:right;top:331.00px;font-size:12.5px;line-height:15px;color:#000;">10000067</div>
<div class="t" style="left:-22px;width:200px;text-align:right;top:331.00px;font-size:12.5px;line-height:15px;color:#000;">01413</div>
<div class="t" style="left:187px;top:331.00px;font-size:12px;line-height:15px;color:#000;letter-spacing:-0.6px;word-spacing:0.9px;white-space:pre;">BROCCOLI  CROWN  IMP (LBS)  LB</div>
<div class="t" style="left:531px;top:331.00px;font-size:12px;line-height:15px;color:#000;">LB</div>
<div class="t" style="left:473.5px;width:200px;text-align:right;top:331.00px;font-size:12.5px;line-height:15px;color:#000;">$3.00</div>
<div class="t" style="left:522.7px;width:200px;text-align:right;top:331.00px;font-size:12.5px;line-height:15px;color:#000;">$0.00</div>
<div class="t" style="left:585.4px;width:200px;text-align:right;top:331.00px;font-size:12.5px;line-height:15px;color:#000;">10</div>
<div class="r" style="left:794px;top:335px;width:16px;height:4px;background:#222;border-radius:1px;"></div>
<div class="r" style="left:800px;top:329px;width:4px;height:16px;background:#222;border-radius:1px;"></div>
<div class="r" style="left:816px;top:335px;width:16px;height:4px;background:#000;border-radius:1px;"></div>
<div class="t" style="left:695.6px;width:200px;text-align:right;top:331.00px;font-size:12.5px;line-height:15px;color:#000;">$30.00</div>
<div class="t" style="left:747.4px;width:200px;text-align:right;top:331.00px;font-size:12.5px;line-height:15px;color:#000;">$0.00</div>
<div class="t" style="left:796.6px;width:200px;text-align:right;top:331.00px;font-size:12.5px;line-height:15px;color:#000;">$0.00</div>
<div class="t" style="left:848.5999999999999px;width:200px;text-align:right;top:331.00px;font-size:12.5px;line-height:15px;color:#000;">$0.00</div>
<div class="t" style="left:916.5px;width:200px;text-align:right;top:331.00px;font-size:12.5px;line-height:15px;color:#000;">$0.00</div>
<div class="t" style="left:982.7px;width:200px;text-align:right;top:331.00px;font-size:12.5px;line-height:15px;color:#000;">$30.00</div>
<div class="t" style="left:-144px;width:200px;text-align:right;top:353.00px;font-size:12.5px;line-height:15px;color:#000;">3</div>
<div class="t" style="left:-76.5px;width:200px;text-align:right;top:353.00px;font-size:12.5px;line-height:15px;color:#000;">10000068</div>
<div class="t" style="left:-22px;width:200px;text-align:right;top:353.00px;font-size:12.5px;line-height:15px;color:#000;">01014</div>
<div class="t" style="left:187px;top:353.00px;font-size:12px;line-height:15px;color:#000;letter-spacing:-0.6px;word-spacing:0.9px;white-space:pre;">CABBAGE  HEAD  H-1  (CS)   CS</div>
<div class="t" style="left:531px;top:353.00px;font-size:12px;line-height:15px;color:#000;">CS</div>
<div class="t" style="left:473.5px;width:200px;text-align:right;top:353.00px;font-size:12.5px;line-height:15px;color:#000;">$3.00</div>
<div class="t" style="left:522.7px;width:200px;text-align:right;top:353.00px;font-size:12.5px;line-height:15px;color:#000;">$0.00</div>
<div class="t" style="left:585.4px;width:200px;text-align:right;top:353.00px;font-size:12.5px;line-height:15px;color:#000;">10</div>
<div class="r" style="left:794px;top:357px;width:16px;height:4px;background:#222;border-radius:1px;"></div>
<div class="r" style="left:800px;top:351px;width:4px;height:16px;background:#222;border-radius:1px;"></div>
<div class="r" style="left:816px;top:357px;width:16px;height:4px;background:#000;border-radius:1px;"></div>
<div class="t" style="left:695.6px;width:200px;text-align:right;top:353.00px;font-size:12.5px;line-height:15px;color:#000;">$30.00</div>
<div class="t" style="left:747.4px;width:200px;text-align:right;top:353.00px;font-size:12.5px;line-height:15px;color:#000;">$0.00</div>
<div class="t" style="left:796.6px;width:200px;text-align:right;top:353.00px;font-size:12.5px;line-height:15px;color:#000;">$0.00</div>
<div class="t" style="left:848.5999999999999px;width:200px;text-align:right;top:353.00px;font-size:12.5px;line-height:15px;color:#000;">$0.00</div>
<div class="t" style="left:916.5px;width:200px;text-align:right;top:353.00px;font-size:12.5px;line-height:15px;color:#000;">$0.00</div>
<div class="t" style="left:982.7px;width:200px;text-align:right;top:353.00px;font-size:12.5px;line-height:15px;color:#000;">$30.00</div>
<div class="t" style="left:-144px;width:200px;text-align:right;top:375.00px;font-size:12.5px;line-height:15px;color:#000;">4</div>
<div class="t" style="left:-76.5px;width:200px;text-align:right;top:375.00px;font-size:12.5px;line-height:15px;color:#000;">10000110</div>
<div class="t" style="left:-22px;width:200px;text-align:right;top:375.00px;font-size:12.5px;line-height:15px;color:#000;">00380</div>
<div class="t" style="left:187px;top:375.00px;font-size:12px;line-height:15px;color:#000;letter-spacing:-0.6px;word-spacing:0.9px;white-space:pre;">CABBAGE  HEAD  H-1  (LB)   LB</div>
<div class="t" style="left:531px;top:375.00px;font-size:12px;line-height:15px;color:#000;">LB</div>
<div class="t" style="left:473.5px;width:200px;text-align:right;top:375.00px;font-size:12.5px;line-height:15px;color:#000;">$3.00</div>
<div class="t" style="left:522.7px;width:200px;text-align:right;top:375.00px;font-size:12.5px;line-height:15px;color:#000;">$0.00</div>
<div class="t" style="left:585.4px;width:200px;text-align:right;top:375.00px;font-size:12.5px;line-height:15px;color:#000;">10</div>
<div class="r" style="left:794px;top:379px;width:16px;height:4px;background:#222;border-radius:1px;"></div>
<div class="r" style="left:800px;top:373px;width:4px;height:16px;background:#222;border-radius:1px;"></div>
<div class="r" style="left:816px;top:379px;width:16px;height:4px;background:#000;border-radius:1px;"></div>
<div class="t" style="left:695.6px;width:200px;text-align:right;top:375.00px;font-size:12.5px;line-height:15px;color:#000;">$30.00</div>
<div class="t" style="left:747.4px;width:200px;text-align:right;top:375.00px;font-size:12.5px;line-height:15px;color:#000;">$0.00</div>
<div class="t" style="left:796.6px;width:200px;text-align:right;top:375.00px;font-size:12.5px;line-height:15px;color:#000;">$0.00</div>
<div class="t" style="left:848.5999999999999px;width:200px;text-align:right;top:375.00px;font-size:12.5px;line-height:15px;color:#000;">$0.00</div>
<div class="t" style="left:916.5px;width:200px;text-align:right;top:375.00px;font-size:12.5px;line-height:15px;color:#000;">$0.00</div>
<div class="t" style="left:982.7px;width:200px;text-align:right;top:375.00px;font-size:12.5px;line-height:15px;color:#000;">$30.00</div>
<div class="t" style="left:1141px;top:260.00px;font-size:15px;line-height:18px;color:#1a1aff;"><span style="display:inline-block;transform:scaleX(0.82);transform-origin:0 50%"><u style="text-underline-offset:2.5px">Choose Columns</u></span></div>
<div class="r" style="left:1240px;top:279px;width:90px;height:304px;overflow:hidden">
<div class="r" style="left:6px;top:24px;width:80px;height:48px;background:transparent;border:1px solid #adadad;box-sizing:border-box;"></div>
<div class="t" style="left:6px;width:80px;text-align:center;top:30.00px;font-size:15px;line-height:18px;color:#000;"><span style="display:inline-block;transform:scaleX(0.81);transform-origin:50% 50%">Add Line</span></div>
<div class="t" style="left:6px;width:80px;text-align:center;top:47.00px;font-size:15px;line-height:18px;color:#000;"><span style="display:inline-block;transform:scaleX(0.81);transform-origin:50% 50%">Items</span></div>
<div class="t" style="left:24px;width:60px;text-align:right;top:63.00px;font-size:9px;line-height:11px;color:#b0b0b0;"><span style="display:inline-block;transform:scaleX(0.9);transform-origin:100% 50%">(F3)</span></div>
<div class="r" style="left:6px;top:80px;width:80px;height:40px;background:transparent;border:1px solid #adadad;box-sizing:border-box;"></div>
<div class="t" style="left:6px;width:80px;text-align:center;top:81.00px;font-size:15px;line-height:18px;color:#000;"><span style="display:inline-block;transform:scaleX(0.81);transform-origin:50% 50%">Add Items</span></div>
<div class="t" style="left:6px;width:80px;text-align:center;top:98.00px;font-size:15px;line-height:18px;color:#000;"><span style="display:inline-block;transform:scaleX(0.81);transform-origin:50% 50%">From...</span></div>
<div class="r" style="left:6px;top:129px;width:80px;height:40px;background:transparent;border:1px solid #c0c0c0;box-sizing:border-box;"></div>
<div class="t" style="left:6px;width:80px;text-align:center;top:131.00px;font-size:15px;line-height:18px;color:#a0a0a0;"><span style="display:inline-block;transform:scaleX(0.81);transform-origin:50% 50%">Remove</span></div>
<div class="t" style="left:6px;width:80px;text-align:center;top:148.00px;font-size:15px;line-height:18px;color:#a0a0a0;"><span style="display:inline-block;transform:scaleX(0.81);transform-origin:50% 50%">Line Item</span></div>
<div class="r" style="left:6px;top:177px;width:80px;height:36px;background:transparent;border:1px solid #adadad;box-sizing:border-box;"></div>
<div class="t" style="left:6px;width:80px;text-align:center;top:187.00px;font-size:15px;line-height:18px;color:#000;"><span style="display:inline-block;transform:scaleX(0.81);transform-origin:50% 50%">Edit Item</span></div>
<div class="t" style="left:24px;width:60px;text-align:right;top:204.00px;font-size:9px;line-height:11px;color:#b0b0b0;"><span style="display:inline-block;transform:scaleX(0.9);transform-origin:100% 50%">(F7)</span></div>
<div class="r" style="left:6px;top:221px;width:80px;height:40px;background:transparent;border:1px solid #adadad;box-sizing:border-box;"></div>
<div class="t" style="left:6px;width:80px;text-align:center;top:223.00px;font-size:15px;line-height:18px;color:#000;"><span style="display:inline-block;transform:scaleX(0.81);transform-origin:50% 50%">Create</span></div>
<div class="t" style="left:6px;width:80px;text-align:center;top:239.00px;font-size:15px;line-height:18px;color:#000;"><span style="display:inline-block;transform:scaleX(0.81);transform-origin:50% 50%">Alias</span></div>
<div class="r" style="left:6px;top:269px;width:80px;height:40px;background:transparent;border:1px solid #c0c0c0;box-sizing:border-box;"></div>
<div class="t" style="left:6px;width:80px;text-align:center;top:271.00px;font-size:15px;line-height:18px;color:#a0a0a0;"><span style="display:inline-block;transform:scaleX(0.81);transform-origin:50% 50%">Renumber</span></div>
<div class="t" style="left:6px;width:80px;text-align:center;top:287.00px;font-size:15px;line-height:18px;color:#a0a0a0;"><span style="display:inline-block;transform:scaleX(0.81);transform-origin:50% 50%">Lines</span></div>
</div>
<div class="r" style="left:1329px;top:279px;width:1px;height:304px;background:#ffffff;"></div>
<div class="r" style="left:1330px;top:296px;width:15px;height:164px;background:#cdcdcd;"></div>
<svg class="r" style="left:1333px;top:284px" width="9" height="8" viewBox="0 0 9 8"><path d="M1 6.5 L4.5 3 L8 6.5" fill="none" stroke="#555" stroke-width="2"/></svg>
<svg class="r" style="left:1333px;top:571px" width="9" height="8" viewBox="0 0 9 8"><path d="M1 1.5 L4.5 5 L8 1.5" fill="none" stroke="#555" stroke-width="2"/></svg>
<div class="t" style="left:484px;width:100px;text-align:right;top:456.00px;font-size:15px;line-height:18px;color:#808080;"><span style="display:inline-block;transform:scaleX(0.81);transform-origin:100% 50%">Freight</span></div>
<div class="r" style="left:588px;top:454px;width:109px;height:23px;background:#f0f0f0;border:2px solid #a0a0a0;box-sizing:border-box;box-shadow:inset 0 0 0 1px #f8f8f8;"></div>
<div class="t" style="left:592px;top:458.00px;font-size:12px;line-height:15px;color:#909090;">$0.00</div>
<div class="r" style="left:705px;top:454px;width:310px;height:23px;background:#f0f0f0;border:1px solid #a0a0a0;box-sizing:border-box;box-shadow:inset 0 0 0 1px #fafafa;"></div>
<div class="t" style="left:709.5px;top:459.00px;font-size:11.5px;line-height:14px;color:#000;letter-spacing:0.4px;">Do Not Distribute</div>
<svg class="r" style="left:995px;top:461px" width="17" height="10" viewBox="0 0 17 10"><path d="M0.5 0.5 H16.5 L8.5 8.8 Z" fill="#222"/></svg>
<div class="r" style="left:1019px;top:464px;width:4px;height:4px;background:#888;"></div>
<div class="r" style="left:1024px;top:464px;width:4px;height:4px;background:#888;"></div>
<div class="r" style="left:1029px;top:464px;width:4px;height:4px;background:#888;"></div>
<div class="t" style="left:1049px;top:456.00px;font-size:15px;line-height:18px;color:#000;"><span style="display:inline-block;transform:scaleX(0.81);transform-origin:0 50%">Note</span></div>
<div class="r" style="left:1081px;top:454px;width:109px;height:23px;background:#f0f0f0;border:2px solid #a0a0a0;box-sizing:border-box;box-shadow:inset 0 0 0 1px #f8f8f8;"></div>
<div class="t" style="left:484px;width:100px;text-align:right;top:482.00px;font-size:15px;line-height:18px;color:#808080;"><span style="display:inline-block;transform:scaleX(0.81);transform-origin:100% 50%">Tax</span></div>
<div class="r" style="left:588px;top:480px;width:109px;height:23px;background:#f0f0f0;border:2px solid #a0a0a0;box-sizing:border-box;box-shadow:inset 0 0 0 1px #f8f8f8;"></div>
<div class="t" style="left:592px;top:484.00px;font-size:12px;line-height:15px;color:#909090;">$0.00</div>
<div class="r" style="left:705px;top:480px;width:310px;height:23px;background:#f0f0f0;border:1px solid #a0a0a0;box-sizing:border-box;box-shadow:inset 0 0 0 1px #fafafa;"></div>
<div class="t" style="left:709.5px;top:485.00px;font-size:11.5px;line-height:14px;color:#000;letter-spacing:0.4px;">Do Not Distribute</div>
<svg class="r" style="left:995px;top:487px" width="17" height="10" viewBox="0 0 17 10"><path d="M0.5 0.5 H16.5 L8.5 8.8 Z" fill="#222"/></svg>
<div class="r" style="left:1019px;top:490px;width:4px;height:4px;background:#888;"></div>
<div class="r" style="left:1024px;top:490px;width:4px;height:4px;background:#888;"></div>
<div class="r" style="left:1029px;top:490px;width:4px;height:4px;background:#888;"></div>
<div class="t" style="left:1049px;top:482.00px;font-size:15px;line-height:18px;color:#000;"><span style="display:inline-block;transform:scaleX(0.81);transform-origin:0 50%">Note</span></div>
<div class="r" style="left:1081px;top:480px;width:109px;height:23px;background:#f0f0f0;border:2px solid #a0a0a0;box-sizing:border-box;box-shadow:inset 0 0 0 1px #f8f8f8;"></div>
<div class="t" style="left:484px;width:100px;text-align:right;top:508.00px;font-size:15px;line-height:18px;color:#808080;"><span style="display:inline-block;transform:scaleX(0.81);transform-origin:100% 50%">Credits</span></div>
<div class="r" style="left:588px;top:506px;width:109px;height:23px;background:#f0f0f0;border:2px solid #a0a0a0;box-sizing:border-box;box-shadow:inset 0 0 0 1px #f8f8f8;"></div>
<div class="t" style="left:592px;top:510.00px;font-size:12px;line-height:15px;color:#909090;">$0.00</div>
<div class="r" style="left:705px;top:506px;width:310px;height:23px;background:#f0f0f0;border:1px solid #a0a0a0;box-sizing:border-box;box-shadow:inset 0 0 0 1px #fafafa;"></div>
<div class="t" style="left:709.5px;top:511.00px;font-size:11.5px;line-height:14px;color:#000;letter-spacing:0.4px;">Do Not Distribute</div>
<svg class="r" style="left:995px;top:513px" width="17" height="10" viewBox="0 0 17 10"><path d="M0.5 0.5 H16.5 L8.5 8.8 Z" fill="#222"/></svg>
<div class="r" style="left:1019px;top:516px;width:4px;height:4px;background:#888;"></div>
<div class="r" style="left:1024px;top:516px;width:4px;height:4px;background:#888;"></div>
<div class="r" style="left:1029px;top:516px;width:4px;height:4px;background:#888;"></div>
<div class="t" style="left:1049px;top:508.00px;font-size:15px;line-height:18px;color:#000;"><span style="display:inline-block;transform:scaleX(0.81);transform-origin:0 50%">Note</span></div>
<div class="r" style="left:1081px;top:506px;width:109px;height:23px;background:#f0f0f0;border:2px solid #a0a0a0;box-sizing:border-box;box-shadow:inset 0 0 0 1px #f8f8f8;"></div>
<div class="t" style="left:484px;width:100px;text-align:right;top:534.00px;font-size:15px;line-height:18px;color:#808080;"><span style="display:inline-block;transform:scaleX(0.81);transform-origin:100% 50%">Discounts</span></div>
<div class="r" style="left:588px;top:532px;width:109px;height:23px;background:#f0f0f0;border:2px solid #a0a0a0;box-sizing:border-box;box-shadow:inset 0 0 0 1px #f8f8f8;"></div>
<div class="t" style="left:592px;top:536.00px;font-size:12px;line-height:15px;color:#909090;">$0.00</div>
<div class="r" style="left:705px;top:532px;width:310px;height:23px;background:#f0f0f0;border:1px solid #a0a0a0;box-sizing:border-box;box-shadow:inset 0 0 0 1px #fafafa;"></div>
<div class="t" style="left:709.5px;top:537.00px;font-size:11.5px;line-height:14px;color:#000;letter-spacing:0.4px;">Do Not Distribute</div>
<svg class="r" style="left:995px;top:539px" width="17" height="10" viewBox="0 0 17 10"><path d="M0.5 0.5 H16.5 L8.5 8.8 Z" fill="#222"/></svg>
<div class="r" style="left:1019px;top:542px;width:4px;height:4px;background:#888;"></div>
<div class="r" style="left:1024px;top:542px;width:4px;height:4px;background:#888;"></div>
<div class="r" style="left:1029px;top:542px;width:4px;height:4px;background:#888;"></div>
<div class="t" style="left:1049px;top:534.00px;font-size:15px;line-height:18px;color:#000;"><span style="display:inline-block;transform:scaleX(0.81);transform-origin:0 50%">Note</span></div>
<div class="r" style="left:1081px;top:532px;width:109px;height:23px;background:#f0f0f0;border:2px solid #a0a0a0;box-sizing:border-box;box-shadow:inset 0 0 0 1px #f8f8f8;"></div>
<div class="t" style="left:530.7px;top:562.00px;font-size:15px;line-height:18px;color:#000;"><span style="display:inline-block;transform:scaleX(0.81);transform-origin:0 50%">Line Count: 4 Unique SKUs: 4</span></div>
<div class="t" style="left:703.3px;top:562.00px;font-size:15px;line-height:18px;color:#000;"><span style="display:inline-block;transform:scaleX(0.81);transform-origin:0 50%">Line Items Quantity: 40</span></div>
<div class="t" style="left:838.2px;top:562.00px;font-size:15px;line-height:18px;color:#000;"><span style="display:inline-block;transform:scaleX(0.81);transform-origin:0 50%">Line Items Total: $130.00</span></div>
<div class="t" style="left:986.4px;top:562.00px;font-size:15px;line-height:18px;color:#000;"><span style="display:inline-block;transform:scaleX(0.81);transform-origin:0 50%">Expenses: $0.00</span></div>
<div class="t" style="left:1086.8px;top:562.00px;font-size:15px;line-height:18px;color:#000;"><span style="display:inline-block;transform:scaleX(0.81);transform-origin:0 50%">Invoice Total: $130.00</span></div>
<div class="t" style="left:12px;top:593.00px;font-size:15px;line-height:18px;color:#2a12a6;"><span style="display:inline-block;transform:scaleX(0.81);transform-origin:0 50%">Don't forget to distribute expenses</span></div>
<div class="r" style="left:10px;top:647px;width:24px;height:24px;background:#f8f8f8;"></div>
<div class="r" style="left:42px;top:647px;width:24px;height:24px;background:#f8f8f8;"></div>
<div class="r" style="left:74px;top:647px;width:24px;height:24px;background:#f8f8f8;"></div>
<div class="r" style="left:106px;top:647px;width:24px;height:24px;background:#f8f8f8;"></div>
<div class="r" style="left:146px;top:647px;width:24px;height:24px;background:#f8f8f8;"></div>
<svg class="r" style="left:10px;top:647px" width="24" height="24" viewBox="0 0 24 24"><path d="M4.3 11.7 L11.6 4.4 V19 Z M11.3 11.7 L19 4.4 V19 Z" fill="#222"/></svg>
<svg class="r" style="left:42px;top:647px" width="24" height="24" viewBox="0 0 24 24"><path d="M7.8 11.7 L15 4.4 V19 Z" fill="#222"/></svg>
<svg class="r" style="left:74px;top:647px" width="24" height="24" viewBox="0 0 24 24"><path d="M16.2 11.7 L9 4.4 V19 Z" fill="#222"/></svg>
<svg class="r" style="left:106px;top:647px" width="24" height="24" viewBox="0 0 24 24"><path d="M19.7 11.7 L12.4 4.4 V19 Z M12.7 11.7 L5 4.4 V19 Z" fill="#222"/></svg>
<svg class="r" style="left:146px;top:647px" width="24" height="24" viewBox="0 0 24 24"><path d="M12 11.7 C9.5 8.6 5.6 8.6 5.6 11.7 C5.6 14.8 9.5 14.8 12 11.7 C14.5 8.6 18.4 8.6 18.4 11.7 C18.4 14.8 14.5 14.8 12 11.7 Z" fill="none" stroke="#222" stroke-width="1.7"/></svg>
<div class="t" style="left:12px;top:673.00px;font-size:15px;line-height:18px;color:#1a1a1a;"><span style="display:inline-block;transform:scaleX(0.81);transform-origin:0 50%">Invoice 38 of 53</span></div>
<div class="r" style="left:668px;top:642px;width:80px;height:40px;background:#fff;border:1px solid #555;box-sizing:border-box;"></div>
<div class="t" style="left:668px;width:80px;text-align:center;top:654.00px;font-size:15px;line-height:18px;color:#000;"><span style="display:inline-block;transform:scaleX(0.81);transform-origin:50% 50%">Links...</span></div>
<div class="r" style="left:756px;top:642px;width:80px;height:40px;background:#fff;border:1px solid #555;box-sizing:border-box;"></div>
<div class="t" style="left:756px;width:80px;text-align:center;top:644.00px;font-size:15px;line-height:18px;color:#000;"><span style="display:inline-block;transform:scaleX(0.81);transform-origin:50% 50%">Attached</span></div>
<div class="t" style="left:756px;width:80px;text-align:center;top:661.00px;font-size:15px;line-height:18px;color:#000;"><span style="display:inline-block;transform:scaleX(0.81);transform-origin:50% 50%">Files...</span></div>
<div class="r" style="left:844px;top:642px;width:80px;height:40px;background:#fff;border:1px solid #555;box-sizing:border-box;"></div>
<div class="t" style="left:844px;width:80px;text-align:center;top:644.00px;font-size:15px;line-height:18px;color:#000;"><span style="display:inline-block;transform:scaleX(0.81);transform-origin:50% 50%">Convert</span></div>
<div class="t" style="left:844px;width:80px;text-align:center;top:661.00px;font-size:15px;line-height:18px;color:#000;"><span style="display:inline-block;transform:scaleX(0.81);transform-origin:50% 50%">to...</span></div>
<div class="r" style="left:932px;top:642px;width:80px;height:40px;background:#fff;border:1px solid #555;box-sizing:border-box;"></div>
<div class="t" style="left:932px;width:80px;text-align:center;top:654.00px;font-size:15px;line-height:18px;color:#000;"><span style="display:inline-block;transform:scaleX(0.81);transform-origin:50% 50%">Print Labels</span></div>
<div class="r" style="left:1020px;top:642px;width:80px;height:40px;background:#fff;border:1px solid #555;box-sizing:border-box;"></div>
<div class="t" style="left:1020px;width:80px;text-align:center;top:654.00px;font-size:15px;line-height:18px;color:#000;"><span style="display:inline-block;transform:scaleX(0.81);transform-origin:50% 50%">Print</span></div>
<div class="r" style="left:1108px;top:642px;width:80px;height:40px;background:#fff;border:1px solid #555;box-sizing:border-box;"></div>
<div class="t" style="left:1108px;width:80px;text-align:center;top:654.00px;font-size:15px;line-height:18px;color:#808080;"><span style="display:inline-block;transform:scaleX(0.81);transform-origin:50% 50%">Save</span></div>
<div class="r" style="left:1196px;top:642px;width:80px;height:40px;background:#fff;border:3px solid #444;box-sizing:border-box;"></div>
<div class="t" style="left:1196px;width:80px;text-align:center;top:654.00px;font-size:15px;line-height:18px;color:#000;"><span style="display:inline-block;transform:scaleX(0.81);transform-origin:50% 50%">Close</span></div>
<div class="r" style="left:1284px;top:642px;width:80px;height:40px;background:#fff;border:1px solid #555;box-sizing:border-box;"></div>
<div class="t" style="left:1284px;width:80px;text-align:center;top:654.00px;font-size:15px;line-height:18px;color:#000;"><span style="display:inline-block;transform:scaleX(0.81);transform-origin:50% 50%">Cancel</span></div>
</body></html>
